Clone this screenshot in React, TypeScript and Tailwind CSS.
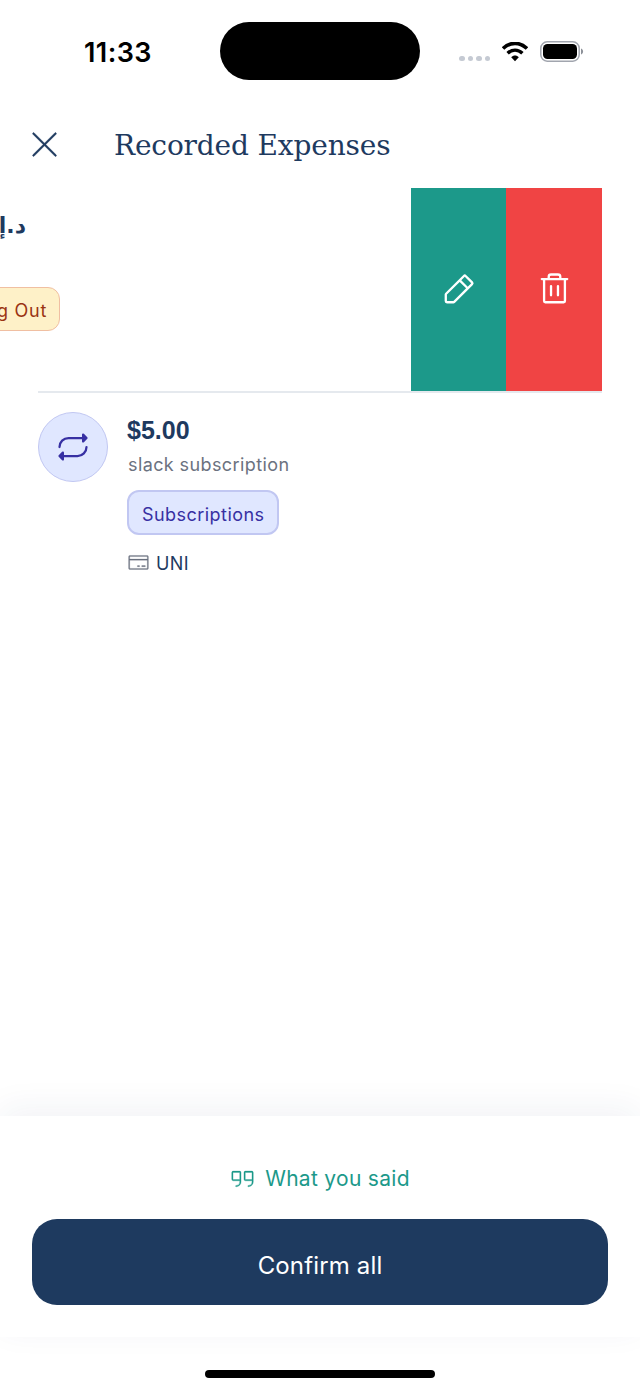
import * as React from "react";
import {
  PiCreditCardLight,
  PiPencilSimple,
  PiQuotesLight,
  PiRepeatFill,
  PiTrash,
  PiXLight,
} from "react-icons/pi";

function StatusBar() {
  return (
    <div className="flex h-[102px] shrink-0 items-center pl-[84px]">
      <span className="w-[136px] pt-[2px] text-[27px] leading-none font-semibold tracking-[0.4px] text-black">
        11:33
      </span>
      <div className="h-[58px] w-[200px] rounded-full bg-black" />
      <div className="ml-[39px] flex items-center">
        <div className="mt-[15px] flex gap-[3px]">
          {[0, 1, 2, 3].map((dot) => (
            <span key={dot} className="size-[5.5px] rounded-full bg-[#c5cad3]" />
          ))}
        </div>
        <svg className="mt-px ml-3 h-5 w-[26px]" viewBox="0 0 26 20" fill="none">
          <path d="M1 6.6C8 -0.4 18 -0.4 25 6.6" stroke="black" strokeWidth="3.6" />
          <path d="M5.6 11.3C10 7 16 7 20.4 11.3" stroke="black" strokeWidth="3.4" />
          <path d="M9.2 15.2C11.4 13 14.6 13 16.8 15.2L13 19.2Z" fill="black" />
        </svg>
        <svg className="ml-3 h-[21px] w-11" viewBox="0 0 44 21" fill="none">
          <rect x="0.8" y="0.8" width="38.4" height="19.4" rx="6.4" stroke="#a1a5ae" strokeWidth="1.5" />
          <rect x="3" y="3" width="34" height="15" rx="4.5" fill="black" />
          <path d="M41 7.5C43.8 8.6 43.8 12.4 41 13.5Z" fill="#8d9199" />
        </svg>
      </div>
    </div>
  );
}

function Header() {
  return (
    <header className="flex h-[85px] shrink-0 items-center pl-[25px] text-[#1e3a5f]">
      <button aria-label="Close">
        <PiXLight className="-mt-px size-[39px] stroke-current stroke-[3]" />
      </button>
      <h1 className="ml-[50px] pt-[3px] font-['DejaVu_Serif',serif] text-[28px] leading-none tracking-[-0.15px] whitespace-nowrap">
        Recorded Expenses
      </h1>
    </header>
  );
}

/** Row swiped to the left: its content is cut off and the actions are revealed. */
function SwipedExpense() {
  return (
    <div className="flex h-[204px] justify-between pt-px">
      <div className="flex w-[60px] flex-col items-end overflow-hidden">
        <div className="mt-[21px] mr-[34px] h-[34px] font-['DejaVu_Sans',sans-serif] text-[22px] leading-[34px] font-bold tracking-[-0.5px] whitespace-nowrap text-[#1e3a5f]">
          د.إ
        </div>
        <div className="mt-[44px] flex h-11 items-center rounded-xl border-[1.5px] border-[#f0bfa2] bg-[#fef1c8] px-3 pt-[2px] text-[18px] tracking-[0.7px] whitespace-nowrap text-[#9a3412]">
          Dining Out
        </div>
      </div>
      <div className="mr-[38px] flex w-[191px] text-white">
        <button aria-label="Edit" className="flex w-[95px] items-center justify-center bg-[#1c998a]">
          <PiPencilSimple className="size-[37px]" />
        </button>
        <button aria-label="Delete" className="flex w-24 items-center justify-center bg-[#f04444]">
          <PiTrash className="size-[37px]" />
        </button>
      </div>
    </div>
  );
}

function Expense() {
  return (
    <div className="mx-[38px] flex gap-[19px] border-t-2 border-[#e5e9ee] pt-[19px]">
      <div className="flex size-[70px] items-center justify-center rounded-full border-[1.5px] border-[#c1c7f2] bg-[#e0e7ff] text-[#3730a3]">
        <PiRepeatFill className="size-9" />
      </div>
      <div className="flex flex-col items-start">
        <div className="mt-[2px] font-['Liberation_Sans',sans-serif] text-[25px] leading-8 font-bold text-[#1e3a5f]">
          $5.00
        </div>
        <div className="mt-[7px] pl-px text-[18px] leading-6 tracking-[0.4px] text-[#6b7280]">
          slack subscription
        </div>
        <div className="mt-[13px] flex h-[45px] items-center rounded-xl border-2 border-[#c1c7f2] bg-[#e0e7ff] px-[13px] pt-[3px] text-[18px] tracking-[0.45px] text-[#3730a3]">
          Subscriptions
        </div>
        <div className="mt-4 flex items-center gap-[6px] text-[18px] leading-6 tracking-[0.4px] text-[#1e3a5f]">
          <PiCreditCardLight className="-mt-[3px] size-[23px] stroke-current stroke-[3] text-[#6b7280]" />
          <span className="pt-px">UNI</span>
        </div>
      </div>
    </div>
  );
}

export default function App() {
  const [confirmed, setConfirmed] = React.useState(false);

  return (
    <div className="flex h-[1391px] w-[640px] flex-col overflow-hidden bg-white font-[Inter,sans-serif]">
      <StatusBar />
      <Header />
      <main className="flex-1">
        <SwipedExpense />
        <Expense />
      </main>
      <footer className="flex h-[221px] shrink-0 flex-col items-center bg-white px-8 shadow-[0_-8px_32px_rgba(30,58,95,0.06)]">
        <button className="mt-[48px] flex h-[30px] items-center gap-[9px] pr-px text-[21px] tracking-[0.3px] text-[#1c998a]">
          <PiQuotesLight className="-mt-[2px] size-[27px] stroke-current stroke-[3]" />
          What you said
        </button>
        <button
          disabled={confirmed}
          onClick={() => setConfirmed(true)}
          className="mt-[25px] h-[86px] w-full rounded-[25px] bg-[#1e3a5f] pt-[7px] text-[24px] tracking-[0.15px] text-white"
        >
          Confirm all
        </button>
      </footer>
      <div className="flex h-[54px] shrink-0 justify-center pt-[33px]">
        <div className="h-2 w-[230px] rounded-full bg-black" />
      </div>
    </div>
  );
}
